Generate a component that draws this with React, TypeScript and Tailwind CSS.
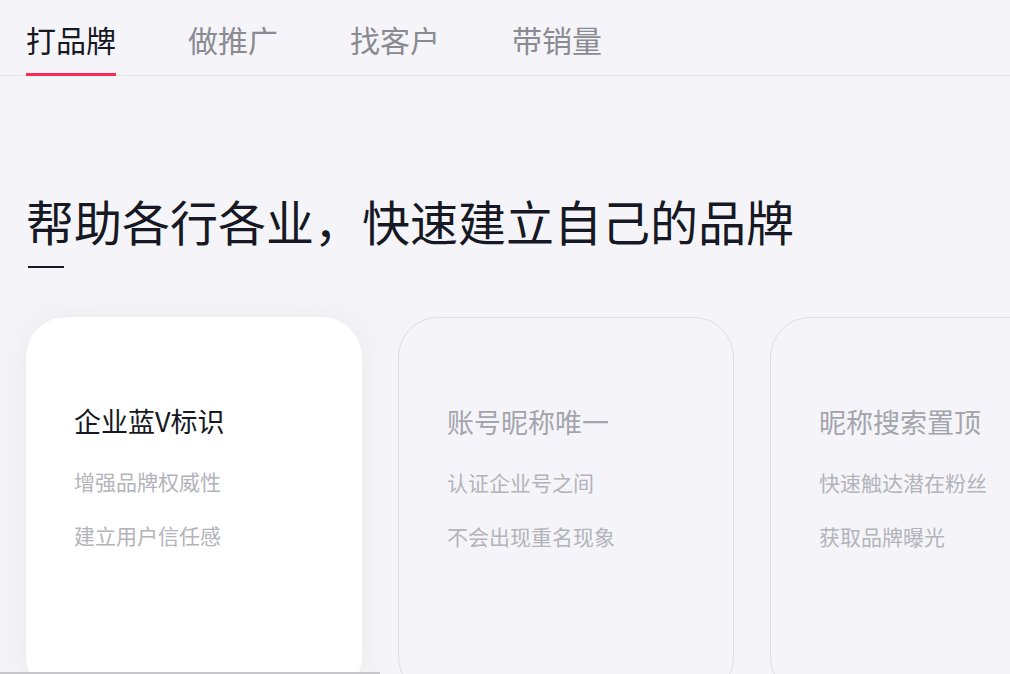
import React from "react";

const tabs = ["打品牌", "做推广", "找客户", "带销量"];

const cards = [
  { title: "企业蓝V标识", lines: ["增强品牌权威性", "建立用户信任感"], active: true },
  { title: "账号昵称唯一", lines: ["认证企业号之间", "不会出现重名现象"], active: false },
  { title: "昵称搜索置顶", lines: ["快速触达潜在粉丝", "获取品牌曝光"], active: false },
];

export default function App() {
  return (
    <div
      className="relative w-[1010px] h-[674px] overflow-hidden bg-[#f5f5f9]"
      style={{ fontFamily: '"Noto Sans CJK SC", "Noto Sans", sans-serif' }}
    >
      <div className="flex gap-[72px] pl-[26px] border-b border-[#e4e4ea] h-[76px]">
        {tabs.map((t, i) => (
          <div
            key={t}
            className={
              "h-[76px] flex items-center text-[30px] leading-none pt-[4px] border-b-[3px] " +
              (i === 0 ? "text-[#161823] border-[#fe2c55]" : "text-[#8a8a92] border-transparent")
            }
          >
            {t}
          </div>
        ))}
      </div>

      <div className="pl-[26px] pt-[120px]">
        <h1 className="text-[48px] leading-[48px] text-[#161823] font-normal">
          帮助各行各业，快速建立自己的品牌
        </h1>
        <div className="mt-[22px] ml-[2px] w-[36px] h-[2px] bg-[#161823]" />
      </div>

      <div className="flex gap-[36px] pl-[26px] mt-[49px]">
        {cards.map((c) => (
          <div
            key={c.title}
            className={
              "shrink-0 w-[336px] h-[380px] rounded-[40px] pl-[48px] pt-[88px] " +
              (c.active
                ? "bg-white shadow-[0_0_30px_rgba(40,40,80,0.07)]"
                : "border border-[#dcdce2]")
            }
          >
            <div
              className={
                "text-[27px] leading-[32px] " + (c.active ? "text-[#161823]" : "text-[#a4a4ad]")
              }
            >
              {c.title}
            </div>
            <div className="mt-[30px] flex flex-col gap-[26px]">
              {c.lines.map((l) => (
                <div key={l} className="text-[21px] leading-[28px] text-[#b3b3bb]">
                  {l}
                </div>
              ))}
            </div>
          </div>
        ))}
      </div>

      <div className="absolute left-0 bottom-0 w-[380px] h-[2px] bg-[#c8c8cc]" />
    </div>
  );
}
